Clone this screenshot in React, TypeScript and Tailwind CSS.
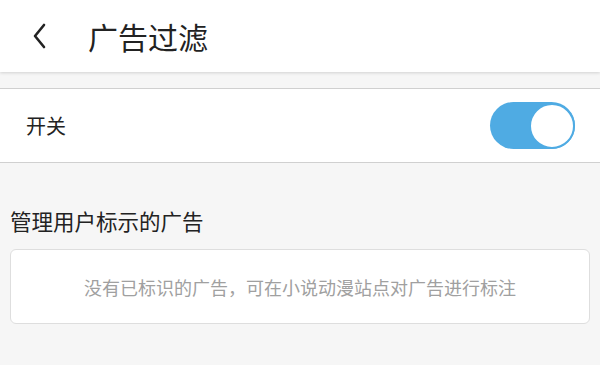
export default function App() {
  return (
    <div
      className="w-[600px] h-[365px] bg-[#f6f6f6] overflow-hidden"
      style={{ fontFamily: '"Noto Sans CJK SC", "Noto Sans", sans-serif' }}
    >
      <div className="h-[72px] bg-white flex items-center shadow-[0_1px_3px_rgba(0,0,0,0.15)] relative">
        <div className="w-[88px] pl-[32px] flex items-center">
          <svg width="16" height="26" viewBox="0 0 16 26" fill="none">
            <path d="M12 2 L3 13 L12 24" stroke="#222" strokeWidth="2.6" strokeLinecap="round" strokeLinejoin="round" />
          </svg>
        </div>
        <span className="text-[30px] leading-none text-[#222]">广告过滤</span>
      </div>

      <div className="mt-[16px] h-[75px] bg-white border-y border-[#d0d0d0] flex items-center justify-between pl-[26px] pr-[25px]">
        <span className="text-[20px] text-[#222]">开关</span>
        <div className="w-[85px] h-[47px] rounded-full bg-[#4fabe3] flex items-center justify-end">
          <div className="w-[46px] h-[46px] rounded-full bg-white border-2 border-[#4fabe3]" />
        </div>
      </div>

      <div className="px-[10px] pt-[47px]">
        <div className="text-[21.5px] leading-none text-[#222]">管理用户标示的广告</div>
        <div className="mt-[17px] h-[75px] bg-white border border-[#dedede] rounded-[6px] flex items-center justify-center pt-[2px]">
          <span className="text-[18px] text-[#a0a0a0]">没有已标识的广告，可在小说动漫站点对广告进行标注</span>
        </div>
      </div>
    </div>
  );
}
